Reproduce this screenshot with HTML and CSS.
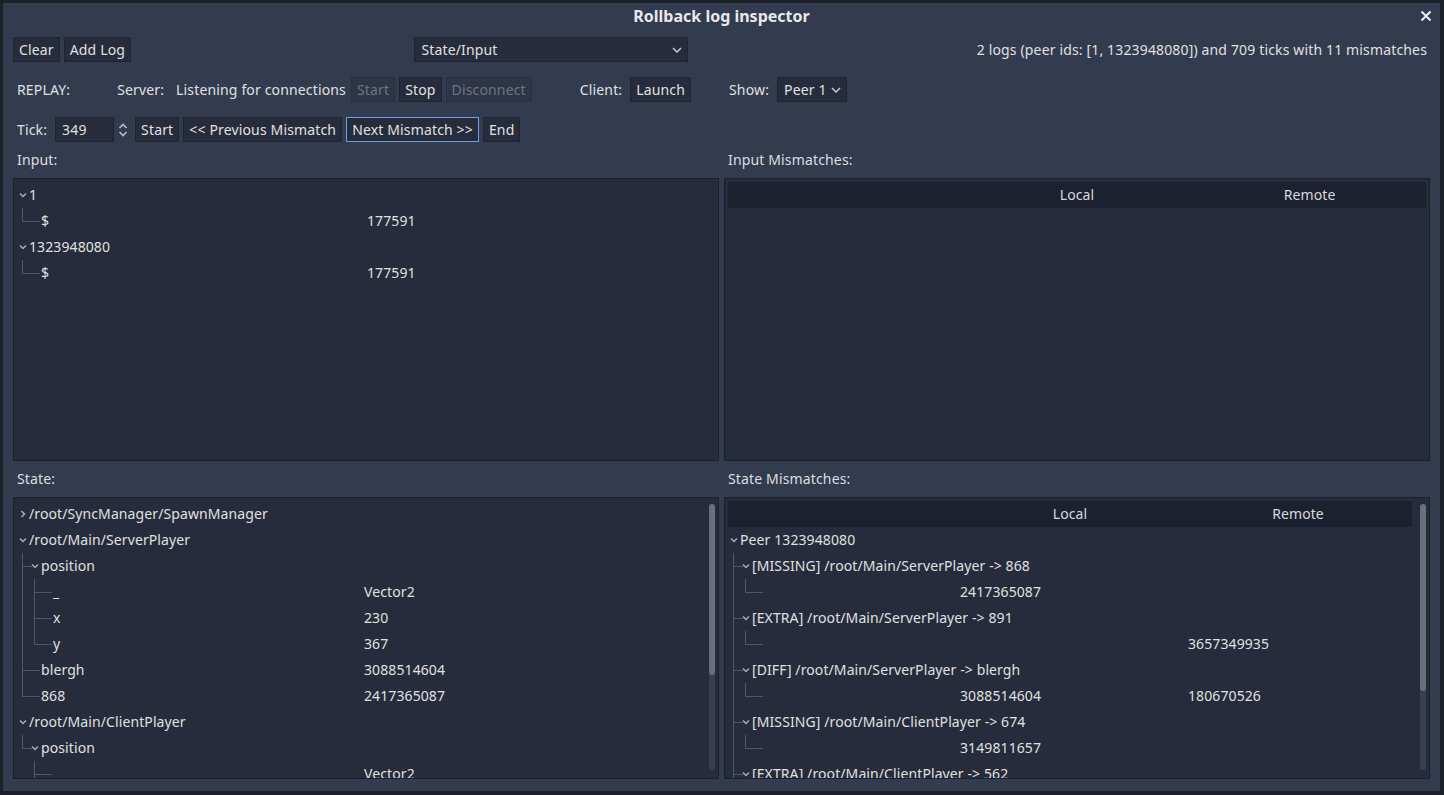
FILE: index.html
```html
<!DOCTYPE html>
<html lang="en">
<head>
<meta charset="utf-8">
<title>Rollback log inspector</title>
<link rel="stylesheet" href="styles.css">
</head>
<body>
<div class="dialog">
  <div class="titlebar">
    <span></span>
    <span class="title">Rollback log inspector</span>
    <span class="close"><svg width="12" height="12" viewBox="0 0 12 12"><path d="M1.5 1.5 L10.5 10.5 M10.5 1.5 L1.5 10.5" stroke="#eef0f3" stroke-width="2" fill="none"/></svg></span>
  </div>
  <div class="body">
    <div class="toolbar">
      <button class="btn">Clear</button>
      <button class="btn">Add Log</button>
      <span class="spacer"></span>
      <div class="select select-mode"><span>State/Input</span><svg class="sel-arrow" width="10" height="6" viewBox="0 0 10 6"><path d="M1 1 L5 5 L9 1" stroke="#c9ccd2" stroke-width="1.5" fill="none"/></svg></div>
      <span class="spacer"></span>
      <span class="status">2 logs (peer ids: [1, 1323948080]) and 709 ticks with 11 mismatches</span>
    </div>
    <div class="toolbar">
      <span class="lbl lbl-replay">REPLAY:</span>
      <span class="lbl lbl-server">Server:</span>
      <span class="lbl lbl-listen">Listening for connections</span>
      <button class="btn" disabled>Start</button>
      <button class="btn">Stop</button>
      <button class="btn" disabled>Disconnect</button>
      <span class="lbl lbl-client">Client:</span>
      <button class="btn">Launch</button>
      <span class="lbl lbl-show">Show:</span>
      <div class="select select-peer"><span>Peer 1</span><svg class="sel-arrow" width="10" height="6" viewBox="0 0 10 6"><path d="M1 1 L5 5 L9 1" stroke="#c9ccd2" stroke-width="1.5" fill="none"/></svg></div>
    </div>
    <div class="toolbar">
      <span class="lbl lbl-tick">Tick:</span>
      <span class="spin-input">349</span>
      <svg class="spin-arrows" width="10" height="16" viewBox="0 0 10 16"><path d="M1.5 6 L5 2.5 L8.5 6 M1.5 10 L5 13.5 L8.5 10" stroke="#b9bcc4" stroke-width="1.6" fill="none"/></svg>
      <button class="btn">Start</button>
      <button class="btn">&lt;&lt; Previous Mismatch</button>
      <button class="btn focused">Next Mismatch &gt;&gt;</button>
      <button class="btn">End</button>
    </div>
    <div class="panes">
      <div class="pane-label">Input:</div>
      <div class="pane-label">Input Mismatches:</div>

      <div class="tree input-tree">
        <div class="tree-body">
          <div class="tr"><div class="c0"><span class="a down"></span><span>1</span></div><div class="c1"></div></div>
          <div class="tr"><div class="c0"><span class="g elbow"></span><span class="a leaf"></span><span>$</span></div><div class="c1">177591</div></div>
          <div class="tr"><div class="c0"><span class="a down"></span><span>1323948080</span></div><div class="c1"></div></div>
          <div class="tr"><div class="c0"><span class="g elbow"></span><span class="a leaf"></span><span>$</span></div><div class="c1">177591</div></div>
        </div>
      </div>

      <div class="tree mm-tree">
        <div class="tree-body">
          <div class="thead"><span></span><span>Local</span><span>Remote</span></div>
        </div>
      </div>

      <div class="pane-label">State:</div>
      <div class="pane-label">State Mismatches:</div>

      <div class="tree state-tree">
        <div class="tree-body">
          <div class="tr"><div class="c0"><span class="a right"></span><span>/root/SyncManager/SpawnManager</span></div><div class="c1"></div></div>
          <div class="tr"><div class="c0"><span class="a down"></span><span>/root/Main/ServerPlayer</span></div><div class="c1"></div></div>
          <div class="tr"><div class="c0"><span class="g tee"></span><span class="a down lead"></span><span>position</span></div><div class="c1"></div></div>
          <div class="tr"><div class="c0"><span class="g v"></span><span class="g tee"></span><span class="a leaf"></span><span>_</span></div><div class="c1">Vector2</div></div>
          <div class="tr"><div class="c0"><span class="g v"></span><span class="g tee"></span><span class="a leaf"></span><span>x</span></div><div class="c1">230</div></div>
          <div class="tr"><div class="c0"><span class="g v"></span><span class="g elbow"></span><span class="a leaf"></span><span>y</span></div><div class="c1">367</div></div>
          <div class="tr"><div class="c0"><span class="g tee"></span><span class="a leaf"></span><span>blergh</span></div><div class="c1">3088514604</div></div>
          <div class="tr"><div class="c0"><span class="g elbow"></span><span class="a leaf"></span><span>868</span></div><div class="c1">2417365087</div></div>
          <div class="tr"><div class="c0"><span class="a down"></span><span>/root/Main/ClientPlayer</span></div><div class="c1"></div></div>
          <div class="tr"><div class="c0"><span class="g elbow"></span><span class="a down lead"></span><span>position</span></div><div class="c1"></div></div>
          <div class="tr"><div class="c0"><span class="g"></span><span class="g tee"></span><span class="a leaf"></span><span></span></div><div class="c1">Vector2</div></div>
        </div>
        <div class="vscroll"><div class="thumb thumb-state"></div></div>
      </div>

      <div class="tree mm-tree state-mm">
        <div class="tree-body">
          <div class="thead"><span></span><span>Local</span><span>Remote</span></div>
          <div class="tr"><div class="c0"><span class="a down"></span><span>Peer 1323948080</span></div><div class="c1"></div><div class="c2"></div></div>
          <div class="tr"><div class="c0"><span class="g tee"></span><span class="a down lead"></span><span>[MISSING] /root/Main/ServerPlayer -&gt; 868</span></div><div class="c1"></div><div class="c2"></div></div>
          <div class="tr"><div class="c0"><span class="g v"></span><span class="g elbow"></span><span class="a leaf"></span></div><div class="c1">2417365087</div><div class="c2"></div></div>
          <div class="tr"><div class="c0"><span class="g tee"></span><span class="a down lead"></span><span>[EXTRA] /root/Main/ServerPlayer -&gt; 891</span></div><div class="c1"></div><div class="c2"></div></div>
          <div class="tr"><div class="c0"><span class="g v"></span><span class="g elbow"></span><span class="a leaf"></span></div><div class="c1"></div><div class="c2">3657349935</div></div>
          <div class="tr"><div class="c0"><span class="g tee"></span><span class="a down lead"></span><span>[DIFF] /root/Main/ServerPlayer -&gt; blergh</span></div><div class="c1"></div><div class="c2"></div></div>
          <div class="tr"><div class="c0"><span class="g v"></span><span class="g elbow"></span><span class="a leaf"></span></div><div class="c1">3088514604</div><div class="c2">180670526</div></div>
          <div class="tr"><div class="c0"><span class="g tee"></span><span class="a down lead"></span><span>[MISSING] /root/Main/ClientPlayer -&gt; 674</span></div><div class="c1"></div><div class="c2"></div></div>
          <div class="tr"><div class="c0"><span class="g v"></span><span class="g elbow"></span><span class="a leaf"></span></div><div class="c1">3149811657</div><div class="c2"></div></div>
          <div class="tr"><div class="c0"><span class="g tee"></span><span class="a down lead"></span><span>[EXTRA] /root/Main/ClientPlayer -&gt; 562</span></div><div class="c1"></div><div class="c2"></div></div>
        </div>
        <div class="vscroll"><div class="thumb thumb-mm"></div></div>
      </div>
    </div>
  </div>
</div>
</body>
</html>
```

FILE: styles.css
```css
* { box-sizing: border-box; }
html, body { margin: 0; height: 100%; }
body {
  background: #1c2029;
  font-family: "Noto Sans", "Open Sans", sans-serif;
  font-size: 14px;
  letter-spacing: 0.15px;
  color: #e0e0e0;
  overflow: hidden;
}
.dialog {
  margin: 3px 0 0 3px;
  width: 1437px;
  height: 788px;
  background: #333b4f;
  display: flex;
  flex-direction: column;
}
.titlebar {
  height: 26px;
  display: grid;
  grid-template-columns: 1fr auto 1fr;
  align-items: center;
}
.title { font-weight: 700; font-size: 16px; letter-spacing: 0; color: #e8e9ec; line-height: 24px; }
.close { justify-self: end; margin-right: 8px; height: 12px; display: flex; }
.body {
  padding: 8px 10px 12px 10px;
  display: flex;
  flex-direction: column;
  flex: 1;
  min-height: 0;
}
.toolbar {
  display: flex;
  align-items: center;
  height: 25px;
  margin-bottom: 15px;
  flex: none;
}
.toolbar:nth-child(3) { margin-bottom: 4px; }
.spacer { flex: 1; }
.btn {
  height: 25px;
  padding: 0 5px;
  margin-right: 4px;
  background: #262c3b;
  border: 1px solid #1f2431;
  color: #e0e0e0;
  font: inherit;
  letter-spacing: inherit;
  line-height: 22px;
  white-space: nowrap;
}
.btn:disabled {
  background: #2e3546;
  border-color: #293040;
  color: #6d7385;
}
.btn.focused { border-color: #6b9ee6; }
.select {
  height: 25px;
  background: #262c3b;
  border: 1px solid #1f2431;
  display: flex;
  align-items: center;
  justify-content: space-between;
  padding: 0 5px 0 6px;
}
.select-mode { width: 274px; margin-right: 9px; }
.select-peer { width: 70px; }
.sel-arrow { flex: none; }
.status { padding-right: 3px; }
.lbl { white-space: nowrap; }
.lbl-replay { margin-left: 4px; }
.lbl-server { margin-left: 47px; }
.lbl-listen { margin-left: 12px; margin-right: 5px; }
.lbl-client { margin-left: 44px; margin-right: 8px; }
.lbl-show { margin-left: 34px; margin-right: 8px; }
.lbl-tick { margin-left: 4px; margin-right: 8px; }
.spin-input {
  width: 59px;
  height: 25px;
  background: #262c3b;
  border: 1px solid #1f2431;
  padding-left: 6px;
  line-height: 23px;
}
.spin-arrows { margin: 0 7px 0 4px; flex: none; }

.panes {
  flex: 1;
  min-height: 0;
  display: grid;
  grid-template-columns: 706px 706px;
  grid-template-rows: 28px 283px 28px 282px;
  column-gap: 5px;
  row-gap: 4px;
}
.pane-label {
  padding-left: 4px;
  line-height: 28px;
  color: #dcdde1;
}
.tree {
  background: #262c3b;
  border: 1px solid #1c202c;
  padding: 3px 3px 0 3px;
  display: flex;
  overflow: hidden;
  letter-spacing: 0.1px;
}
.tree-body {
  flex: 1;
  min-width: 0;
  display: flex;
  flex-direction: column;
  overflow: hidden;
}
.thead {
  flex: none;
  height: 26px;
  display: grid;
  grid-template-columns: 1fr 1fr 1fr;
  background: #1c2130;
  line-height: 26px;
  text-align: center;
  color: #d8d9dd;
}
.tr {
  flex: none;
  height: 26px;
  line-height: 26px;
  display: grid;
  white-space: nowrap;
}
.input-tree .tr { grid-template-columns: 346px 1fr; }
.state-tree .tr { grid-template-columns: 343px 1fr; }
.mm-tree .tr { grid-template-columns: 1fr 1fr 1fr; }
.c0 { display: flex; overflow: hidden; }
.mm-tree .c0 { overflow: visible; }
.c1, .c2 { padding-left: 4px; overflow: hidden; }

/* tree guides */
.g, .a {
  flex: none;
  width: 12px;
  height: 26px;
  background-repeat: no-repeat;
}
.g.v {
  background-image: linear-gradient(#4f5668, #4f5668);
  background-position: 5px 0;
  background-size: 1px 26px;
}
.g.tee {
  background-image: linear-gradient(#4f5668, #4f5668), linear-gradient(#4f5668, #4f5668);
  background-position: 5px 0, 5px 13px;
  background-size: 1px 26px, 7px 1px;
}
.g.elbow {
  background-image: linear-gradient(#4f5668, #4f5668), linear-gradient(#4f5668, #4f5668);
  background-position: 5px 0, 5px 13px;
  background-size: 1px 14px, 7px 1px;
}
.a.leaf {
  background-image: linear-gradient(#4f5668, #4f5668);
  background-position: 0 13px;
  background-size: 11px 1px;
}
.a.down {
  background-image: url("data:image/svg+xml,%3Csvg xmlns='http://www.w3.org/2000/svg' width='12' height='26'%3E%3Cpath d='M3 11.5 L6 14.5 L9 11.5' stroke='%23a9adb6' stroke-width='1.5' fill='none'/%3E%3C/svg%3E");
}
.a.right {
  background-image: url("data:image/svg+xml,%3Csvg xmlns='http://www.w3.org/2000/svg' width='12' height='26'%3E%3Cpath d='M4.5 10 L7.5 13 L4.5 16' stroke='%23a9adb6' stroke-width='1.5' fill='none'/%3E%3C/svg%3E");
}
.a.down.lead {
  background-image: url("data:image/svg+xml,%3Csvg xmlns='http://www.w3.org/2000/svg' width='12' height='26'%3E%3Cpath d='M3 11.5 L6 14.5 L9 11.5' stroke='%23a9adb6' stroke-width='1.5' fill='none'/%3E%3C/svg%3E"), linear-gradient(#4f5668, #4f5668);
  background-position: 0 0, 0 13px;
  background-size: 12px 26px, 3px 1px;
}

.vscroll {
  flex: none;
  width: 6px;
  margin: 3px 0 8px 8px;
  border-radius: 3px;
  background: #383f50;
  display: flex;
  flex-direction: column;
}
.thumb { background: #6a6f7d; border-radius: 3px; }
.thumb-state { height: 171px; }
.thumb-mm { height: 187px; }
```
